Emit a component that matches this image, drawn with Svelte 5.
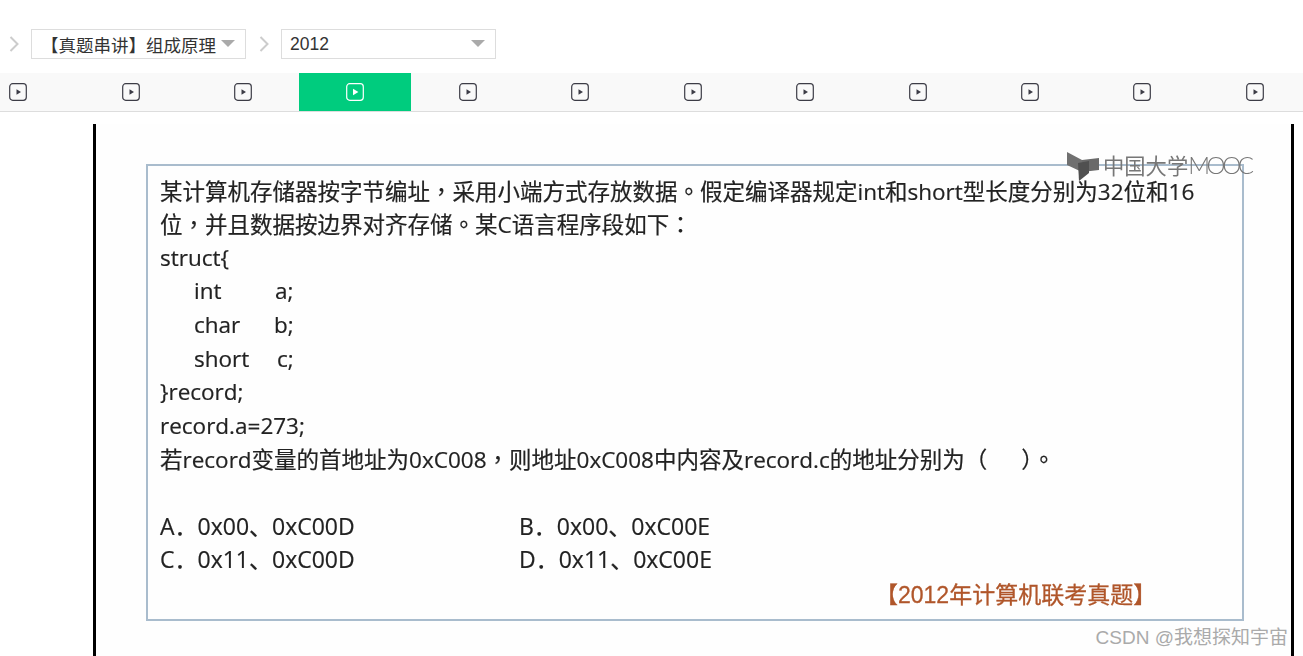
<script>
	const tabs = Array.from({ length: 12 }, (_, i) => i);
	const active = 3;

	const codeLines = [
		{ type: 'int', name: 'a;', col: 81 },
		{ type: 'char', name: 'b;', col: 80 },
		{ type: 'short', name: 'c;', col: 83 }
	];

	const options = ['A．0x00、0xC00D', 'B．0x00、0xC00E', 'C．0x11、0xC00D', 'D．0x11、0xC00E'];
</script>

{#snippet chevron()}
	<svg class="chevron" width="10" height="16" viewBox="0 0 10 16" aria-hidden="true">
		<path d="M1.5 1 L8.5 8 L1.5 15" fill="none" stroke="#ccc" stroke-width="2" />
	</svg>
{/snippet}

<div class="page">
	<div class="crumbs">
		{@render chevron()}
		<div class="select first">
			<span class="label">【真题串讲】组成原理</span>
			<i class="arrow"></i>
		</div>
		{@render chevron()}
		<div class="select second">
			<span class="label">2012</span>
			<i class="arrow"></i>
		</div>
	</div>

	<div class="tabs">
		{#each tabs as tab}
			<div class="tab" class:active={tab === active}>
				<svg width="18" height="18" viewBox="0 0 18 18" aria-hidden="true">
					<rect x="0.7" y="0.7" width="16.6" height="16.6" rx="3" fill="none" stroke="currentColor" stroke-width="1.2" />
					{#if tab === active}
						<path d="M7 5.8 L12.4 9 L7 12.2 Z" fill="currentColor" />
					{:else}
						<path d="M7.5 6.2 L12 9 L7.5 11.8 Z" fill="currentColor" />
					{/if}
				</svg>
			</div>
		{/each}
	</div>

	<div class="video">
		<div class="slide">
			<div class="question">
				<p>某计算机存储器按字节编址<span class="punct">，</span>采用小端方式存放数据<span class="punct">。</span>假定编译器规定int和short型长度分别为32位和16</p>
				<p>位<span class="punct">，</span>并且数据按边界对齐存储<span class="punct">。</span>某C语言程序段如下<span class="punct">：</span></p>
				<p>struct&#123;</p>
				{#each codeLines as line}
					<p class="code"><span style="width: {line.col}px">{line.type}</span><span>{line.name}</span></p>
				{/each}
				<p>&#125;record;</p>
				<p>record.a=273;</p>
				<p>若record变量的首地址为0xC008<span class="punct">，</span>则地址0xC008中内容及record.c的地址分别为<span class="punct">（</span><span class="blank"></span><span class="punct">）。</span></p>
				<div class="options">
					{#each options as option}
						<span>{option}</span>
					{/each}
				</div>
				<p class="source">【2012年计算机联考真题】</p>
			</div>
		</div>

		<div class="logo">
			<svg width="33" height="30" viewBox="0 0 33 30" aria-hidden="true">
				<path d="M0 0 L15 8 L15 20 L0 13 Z" fill="#707070" />
				<path d="M15 8 L32 6 L32 18 L15 20 Z" fill="#6a6a6a" />
				<path d="M11 11 L22 9 L22 21 L12 29 Z" fill="#505050" />
			</svg>
			<span class="cn">中国大学</span><span class="en">MOOC</span>
		</div>
	</div>

	<div class="watermark">CSDN @我想探知宇宙</div>
</div>

<style>
	:global(body) {
		margin: 0;
		background: #fff;
		overflow: hidden;
	}

	.page {
		position: relative;
		width: 1303px;
		height: 656px;
		overflow: hidden;
		font-family: "Liberation Sans", "Noto Sans CJK SC", sans-serif;
	}

	.crumbs {
		display: flex;
		align-items: center;
		height: 30px;
		padding: 29px 0 14px 9px;
	}

	.chevron {
		flex: none;
	}

	.select {
		box-sizing: border-box;
		display: flex;
		align-items: center;
		justify-content: space-between;
		width: 215px;
		height: 30px;
		border: 1px solid #ddd;
		font-size: 17.5px;
		color: #333;
	}

	.label {
		margin-top: 1px;
	}

	.select.first {
		margin: 0 13px 0 12px;
		padding: 0 10px 0 9px;
	}

	.select.second {
		margin-left: 12px;
		padding: 0 10px 0 8px;
	}

	.arrow {
		flex: none;
		width: 0;
		height: 0;
		border-left: 7px solid transparent;
		border-right: 7px solid transparent;
		border-top: 7px solid #aaa;
		margin-bottom: 2px;
	}

	.tabs {
		display: flex;
		height: 38px;
		background: #f9f9f9;
		border-bottom: 1px solid #ddd;
	}

	.tab {
		flex: none;
		box-sizing: border-box;
		display: flex;
		align-items: center;
		justify-content: center;
		width: 112.45px;
		height: 38px;
		padding-left: 0.8px;
		color: #3c3c46;
	}

	.tab:first-child {
		margin-left: -38.5px;
	}

	.tab.active {
		background: #00cc7e;
		color: #fff;
	}

	.video {
		position: relative;
		box-sizing: border-box;
		width: 1201px;
		height: 532px;
		margin: 12px 0 0 93px;
		padding: 40px 47px 0 50px;
		border-left: 3px solid #000;
		border-right: 3px solid #000;
		background: #fefefe;
	}

	.slide {
		box-sizing: border-box;
		height: 457px;
		padding: 7.6px 0 0 12px;
		border: 2px solid #a9bccd;
		filter: blur(0.4px);
	}

	.question {
		font-family: "Open Sans", "Noto Sans CJK SC", sans-serif;
		font-size: 22.5px;
		line-height: 33.6px;
		color: #222;
		white-space: nowrap;
		-webkit-text-stroke: 0.2px #222;
	}

	.question p {
		height: 33.6px;
		margin: 0;
	}

	.punct {
		font-family: "Noto Sans CJK TC", sans-serif;
	}

	.blank {
		display: inline-block;
		width: 34px;
	}

	.code {
		display: flex;
		padding-left: 34px;
	}

	.options {
		display: grid;
		grid-template-columns: 359px 1fr;
		grid-auto-rows: 33.6px;
		margin-top: 33.6px;
		font-size: 23px;
	}

	.question .source {
		margin: 2px 0 0 715px;
		font-family: "Liberation Sans", "Noto Sans CJK SC", sans-serif;
		color: #b0562a;
		font-size: 23px;
		-webkit-text-stroke: 0.3px #b0562a;
	}

	.logo {
		position: absolute;
		top: 28px;
		left: 971px;
		display: flex;
		align-items: flex-start;
		color: #777;
		line-height: 26px;
		filter: blur(0.4px);
	}

	.logo svg {
		margin-right: 3px;
	}

	.cn {
		font-family: "Noto Sans CJK SC", sans-serif;
		font-size: 21.3px;
	}

	.en {
		font-family: "Lato", sans-serif;
		font-weight: 300;
		font-size: 24px;
		letter-spacing: -3.4px;
	}

	.watermark {
		position: absolute;
		right: 15px;
		bottom: 6px;
		font-family: "Liberation Sans", "Noto Sans CJK SC", sans-serif;
		font-size: 19px;
		line-height: 24px;
		color: #aaa;
	}
</style>
